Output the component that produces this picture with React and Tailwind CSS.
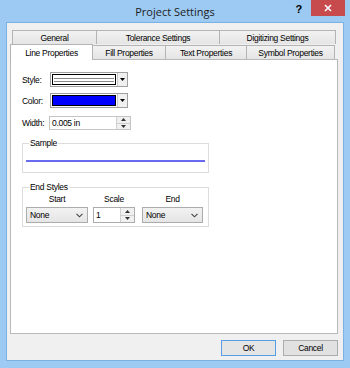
import React from 'react';

const font = { fontFamily: '"Liberation Sans", Arial, sans-serif' };

function Tab({ label, width, selected }) {
  if (selected) {
    return (
      <div
        className="relative z-10 -mb-px h-[16px] flex items-start justify-center bg-white border border-b-0 border-[#b4b4b4] leading-[12px] pt-[2px]"
        style={{ width }}
      >
        {label}
      </div>
    );
  }
  return (
    <div
      className="h-[14px] -ml-px first:ml-0 flex items-center justify-center bg-gradient-to-b from-[#f2f2f2] to-[#e5e5e5] border border-b-0 border-[#b4b4b4] leading-[12px]"
      style={{ width }}
    >
      {label}
    </div>
  );
}

function ArrowButton() {
  return (
    <div className="w-[10px] h-full flex items-center justify-center bg-[#f0f0f0] border-l border-[#c8c8c8]">
      <svg width="5" height="3" viewBox="0 0 5 3">
        <path d="M0 0h5L2.5 3z" fill="#000" />
      </svg>
    </div>
  );
}

function Spinner() {
  return (
    <div className="w-[14px] h-full flex flex-col border-l border-[#d0d0d0] bg-[#f0f0f0]">
      <div className="flex-1 flex items-center justify-center border-b border-[#d0d0d0]">
        <svg width="5" height="3" viewBox="0 0 5 3">
          <path d="M0 3h5L2.5 0z" fill="#333" />
        </svg>
      </div>
      <div className="flex-1 flex items-center justify-center">
        <svg width="5" height="3" viewBox="0 0 5 3">
          <path d="M0 0h5L2.5 3z" fill="#333" />
        </svg>
      </div>
    </div>
  );
}

function Chevron() {
  return (
    <svg width="7" height="5" viewBox="0 0 7 5" className="mr-[4px]">
      <path d="M0.5 0.8L3.5 3.8L6.5 0.8" fill="none" stroke="#444" strokeWidth="1.1" />
    </svg>
  );
}

function Select({ width, value }) {
  return (
    <div
      className="h-[16px] flex items-center justify-between border border-[#acacac] bg-gradient-to-b from-[#f2f2f2] to-[#e5e5e5] leading-[12px] pl-[3px]"
      style={{ width }}
    >
      <span>{value}</span>
      <Chevron />
    </div>
  );
}

export default function App() {
  return (
    <div
      className="w-[350px] h-[368px] bg-[#9ccaf3] flex flex-col overflow-hidden text-black text-[8.5px] tracking-[-0.3px]"
      style={font}
    >
      {/* title bar */}
      <div className="h-[22px] grid grid-cols-[1fr_auto_1fr] items-start">
        <div />
        <div
          className="pt-[4px] text-[11px] leading-[15px] tracking-normal text-[#1c1c1c]"
          style={{ fontFamily: '"Open Sans", "Noto Sans", sans-serif' }}
        >
          Project Settings
        </div>
        <div className="flex justify-end items-start">
          <span className="mt-[3px] mr-[9px] text-[11px] font-bold leading-[12px]">?</span>
          <div className="w-[34px] h-[16px] mr-[5px] bg-[#c74a4c] flex items-center justify-center">
            <svg width="8" height="8" viewBox="0 0 8 8">
              <path d="M1 1L7 7M7 1L1 7" stroke="#fff" strokeWidth="1.6" />
            </svg>
          </div>
        </div>
      </div>

      {/* client */}
      <div className="mx-[6px] h-[339px] bg-[#f0f0f0] border border-[#7bb0e2] flex flex-col">
        {/* tab row 1 */}
        <div className="mt-[7px] ml-[5px] flex">
          <Tab label="General" width={85} />
          <Tab label="Tolerance Settings" width={124} />
          <Tab label="Digitizing Settings" width={117} />
        </div>
        {/* tab row 2 */}
        <div className="ml-[3px] flex items-end">
          <Tab label="Line Properties" width={83} selected />
          <Tab label="Fill Properties" width={74} />
          <Tab label="Text Properties" width={82} />
          <Tab label="Symbol Properties" width={89} />
        </div>

        {/* panel */}
        <div className="ml-[3px] w-[328px] h-[275px] bg-white border border-[#b9b9b9] pl-[11px] leading-[12px]">
          <div className="mt-[12px] flex items-center">
            <span className="w-[28px]">Style:</span>
            <div className="w-[78px] h-[15px] flex border border-[#a0a0a0] bg-white">
              <div className="flex-1 p-[1px]">
                <div className="h-full border border-black flex flex-col justify-center gap-[2px] px-[1px]">
                  <div className="h-px bg-[#888]" />
                  <div className="h-px bg-[#888]" />
                </div>
              </div>
              <ArrowButton />
            </div>
          </div>

          <div className="mt-[6px] flex items-center">
            <span className="w-[28px]">Color:</span>
            <div className="w-[78px] h-[15px] flex border border-[#a0a0a0] bg-white">
              <div className="flex-1 p-[1px]">
                <div className="h-full border border-black bg-[#0000ff]" />
              </div>
              <ArrowButton />
            </div>
          </div>

          <div className="mt-[8px] flex items-center">
            <span className="w-[27px]">Width:</span>
            <div className="w-[82px] h-[14px] flex border border-[#c4c4c4] bg-white">
              <span className="flex-1 pl-[2px] leading-[12px]">0.005 in</span>
              <Spinner />
            </div>
          </div>

          <fieldset className="mt-[8px] w-[187px] h-[35px] border border-[#dcdcdc] px-[3px]">
            <legend className="ml-[3px] px-[1px] leading-[11px]">Sample</legend>
            <div className="mt-[11px] h-[2px] bg-[#6a6af0]" />
          </fieldset>

          <fieldset className="mt-[9px] w-[187px] h-[45px] border border-[#dcdcdc] px-[3px]">
            <legend className="ml-[3px] px-[1px] leading-[11px]">End Styles</legend>
            <div className="flex gap-[5px]">
              <div className="w-[62px] flex flex-col items-center gap-[2px]">
                <span className="leading-[12px]">Start</span>
                <Select width={62} value="None" />
              </div>
              <div className="w-[42px] flex flex-col items-center gap-[2px]">
                <span className="leading-[12px]">Scale</span>
                <div className="w-[42px] h-[16px] flex border border-[#acacac] bg-white">
                  <span className="flex-1 pl-[2px] leading-[14px]">1</span>
                  <Spinner />
                </div>
              </div>
              <div className="ml-[2px] w-[61px] flex flex-col items-center gap-[2px]">
                <span className="leading-[12px]">End</span>
                <Select width={61} value="None" />
              </div>
            </div>
          </fieldset>
        </div>

        {/* buttons */}
        <div className="mt-[6px] mr-[5px] flex justify-end gap-[7px]">
          <button className="w-[55px] h-[16px] bg-[#e5e5e5] border border-[#5a9de0] leading-[12px]">OK</button>
          <button className="w-[55px] h-[16px] bg-[#e1e1e1] border border-[#adadad] leading-[12px]">Cancel</button>
        </div>
      </div>
    </div>
  );
}
